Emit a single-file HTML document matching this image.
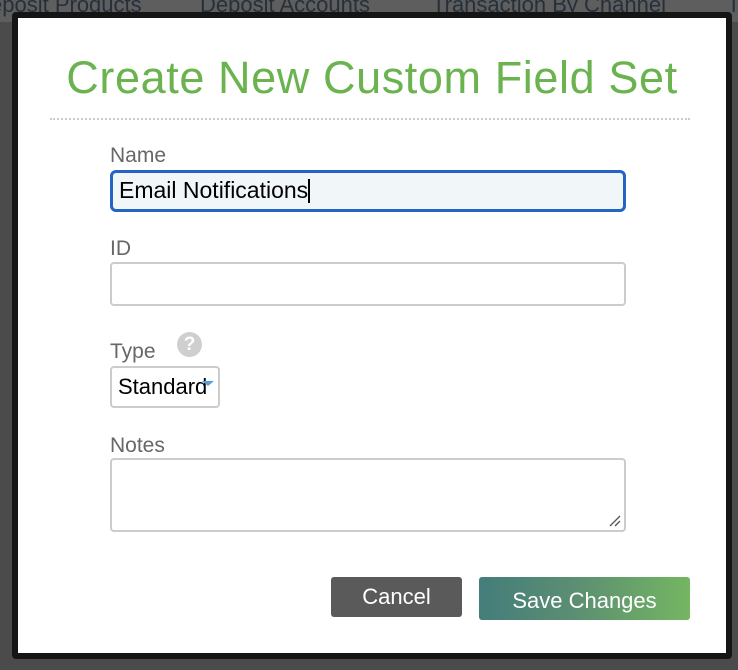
<!DOCTYPE html>
<html><head><meta charset="utf-8"><style>
*{box-sizing:border-box;margin:0;padding:0}
body{width:738px;height:670px;background:#4b4b4b;position:relative;overflow:hidden;font-family:"Liberation Sans",sans-serif}
.top{position:absolute;left:0;top:0;width:738px;height:22px;background:#5e5e5e;color:#26303a;font-size:22px;line-height:12px;white-space:nowrap;overflow:hidden}
.top span{position:absolute;top:-1px}
.modal{position:absolute;left:12px;top:12px;width:720px;height:647px;background:#fff;border:6px solid #151515;border-radius:4px}
.abs{position:absolute}
h1{position:absolute;left:0;width:708px;top:34px;text-align:center;color:#6ab34f;font-weight:normal;font-size:45px;letter-spacing:0.6px}
.dots{position:absolute;left:32px;top:100px;width:640px;border-top:2px dotted #ccc}
.lbl{position:absolute;left:92px;color:#676767;font-size:21px}
.inp{position:absolute;left:92px;width:516px;border:2px solid #ccc;border-radius:4px;background:#fff}
.btn{position:absolute;color:#fff;font-size:22px;text-align:center;border-radius:3px}
</style></head><body>
<div class="top"><span style="left:-10px">eposit Products</span><span style="left:200px">Deposit Accounts</span><span style="left:432px">Transaction By Channel</span><span style="left:727px">Tr</span></div>
<div class="modal">
<h1>Create New Custom Field Set</h1>
<div class="dots"></div>
<div class="lbl" style="top:126px">Name</div>
<div class="inp" style="top:152px;height:42px;border:3px solid #2563c4;border-radius:6px;background:#f1f6f9;font-size:23px;color:#000;padding:4px 0 0 6px">Email Notifications<span style="display:inline-block;width:2px;height:24px;background:#000;vertical-align:-5px"></span></div>
<div class="lbl" style="top:219px">ID</div>
<div class="inp" style="top:244px;height:44px"></div>
<div class="lbl" style="top:322px">Type</div>
<div class="abs" style="left:159px;top:314px;width:25px;height:25px;border-radius:50%;background:#cfcfcf;color:#fff;font-weight:bold;font-size:19px;text-align:center;line-height:25px">?</div>
<div class="inp" style="top:348px;width:110px;height:42px;font-size:22px;color:#000;padding:6px 0 0 6px;overflow:hidden">Standard<span class="abs" style="left:90px;top:13px;width:0;height:0;border-left:6px solid transparent;border-right:6px solid transparent;border-top:5px solid #5aa0d8"></span></div>
<div class="lbl" style="top:416px">Notes</div>
<div class="inp" style="top:440px;height:74px"><svg class="abs" style="right:2px;bottom:2px" width="14" height="14"><path d="M2 12L12 2M7 12L12 7" stroke="#555" stroke-width="1.3"/></svg></div>
<div class="btn" style="left:313px;top:559px;width:131px;height:40px;background:#5a5a5a;line-height:40px">Cancel</div>
<div class="btn" style="left:461px;top:559px;width:211px;height:43px;background:linear-gradient(90deg,#447d7b,#5b8e72 45%,#74b662);line-height:48px">Save Changes</div>
</div>
</body></html>
